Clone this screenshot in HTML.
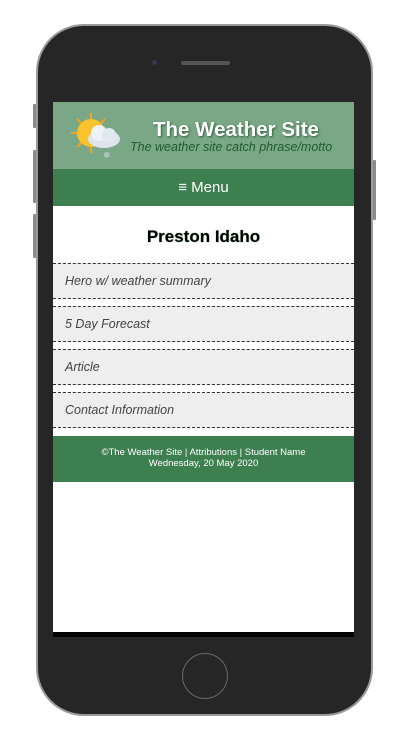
<!DOCTYPE html>
<html><head><meta charset="utf-8"><style>
body{margin:0;width:414px;height:736px;background:#fff;position:relative;overflow:hidden;font-family:"Liberation Sans",sans-serif}
.phone{position:absolute;left:36px;top:24px;width:337px;height:692px;border-radius:48px;background:#9a9a9a;}
.inner{position:absolute;left:2px;top:2px;right:2px;bottom:2px;border-radius:46px;background:#262626;}
.btn{position:absolute;background:#8a8a8a;width:3px;border-radius:1px}
.screen{position:absolute;left:53px;top:102px;width:301px;height:530px;background:#fff;overflow:hidden}
.blk{position:absolute;left:53px;top:632px;width:301px;height:5px;background:#000}
.hdr{height:67px;background:#7aa886;position:relative}
.title{position:absolute;left:100px;top:16px;color:#fff;font-weight:bold;font-size:20.5px;text-shadow:1px 1px 2px #2f5f3a;}
.motto{position:absolute;left:77px;top:38px;color:#1f5c2e;font-style:italic;font-size:12.5px;}
.nav{height:37px;background:#3d7f4f;color:#fff;text-align:center;font-size:15px;line-height:37px;}
h1{margin:0;text-align:center;font-size:17px;font-weight:bold;height:57px;line-height:62px;text-shadow:0 0 1px #3d7f4f}
.sec{height:34px;background:#eee;border-top:1px dashed #333;border-bottom:1px dashed #333;margin-bottom:7px;font-style:italic;font-size:12.5px;color:#444;line-height:34px;padding-left:12px;}
.foot{position:absolute;top:334px;left:0;width:301px;height:46px;background:#3d7f4f;color:#fff;font-size:9.5px;text-align:center;padding-top:12px;box-sizing:border-box;line-height:10.5px}
</style></head><body>
<div class="btn" style="left:33px;top:104px;height:24px"></div>
<div class="btn" style="left:33px;top:150px;height:53px"></div>
<div class="btn" style="left:33px;top:214px;height:44px"></div>
<div class="btn" style="left:373px;top:160px;height:60px"></div>
<div class="phone"><div class="inner"></div></div>
<div style="position:absolute;left:152px;top:60px;width:5px;height:5px;border-radius:50%;background:#3a3550"></div>
<div style="position:absolute;left:181px;top:61px;width:49px;height:4px;border-radius:2px;background:#555"></div>
<div style="position:absolute;left:182px;top:653px;width:46px;height:46px;border-radius:50%;border:1.5px solid #666;box-sizing:border-box"></div>
<div class="screen">
<div class="hdr">
<svg style="position:absolute;left:16px;top:9px" width="54" height="50" viewBox="0 0 54 50">
<g stroke="#f7a21b" stroke-width="2">
<line x1="22" y1="2" x2="22" y2="42"/><line x1="2" y1="22" x2="42" y2="22"/><line x1="8" y1="8" x2="36" y2="36"/><line x1="36" y1="8" x2="8" y2="36"/></g>
<circle cx="22" cy="22" r="14" fill="#f9c22e"/>
<ellipse cx="35" cy="28" rx="16" ry="9" fill="#dde4ec"/><circle cx="30" cy="22" r="8" fill="#eef2f6"/><circle cx="40" cy="24" r="7" fill="#e2e8ef"/>
<text x="34" y="47" font-size="9" fill="#cfd8e0">❄</text>
</svg>
<div class="title">The Weather Site</div>
<div class="motto">The weather site catch phrase/motto</div>
</div>
<div class="nav">≡ Menu</div>
<h1>Preston Idaho</h1>
<div class="sec">Hero w/ weather summary</div>
<div class="sec">5 Day Forecast</div>
<div class="sec">Article</div>
<div class="sec">Contact Information</div>
<div class="foot">©The Weather Site | Attributions | Student Name<br>Wednesday, 20 May 2020</div>
</div>
<div class="blk"></div>
</body></html>
